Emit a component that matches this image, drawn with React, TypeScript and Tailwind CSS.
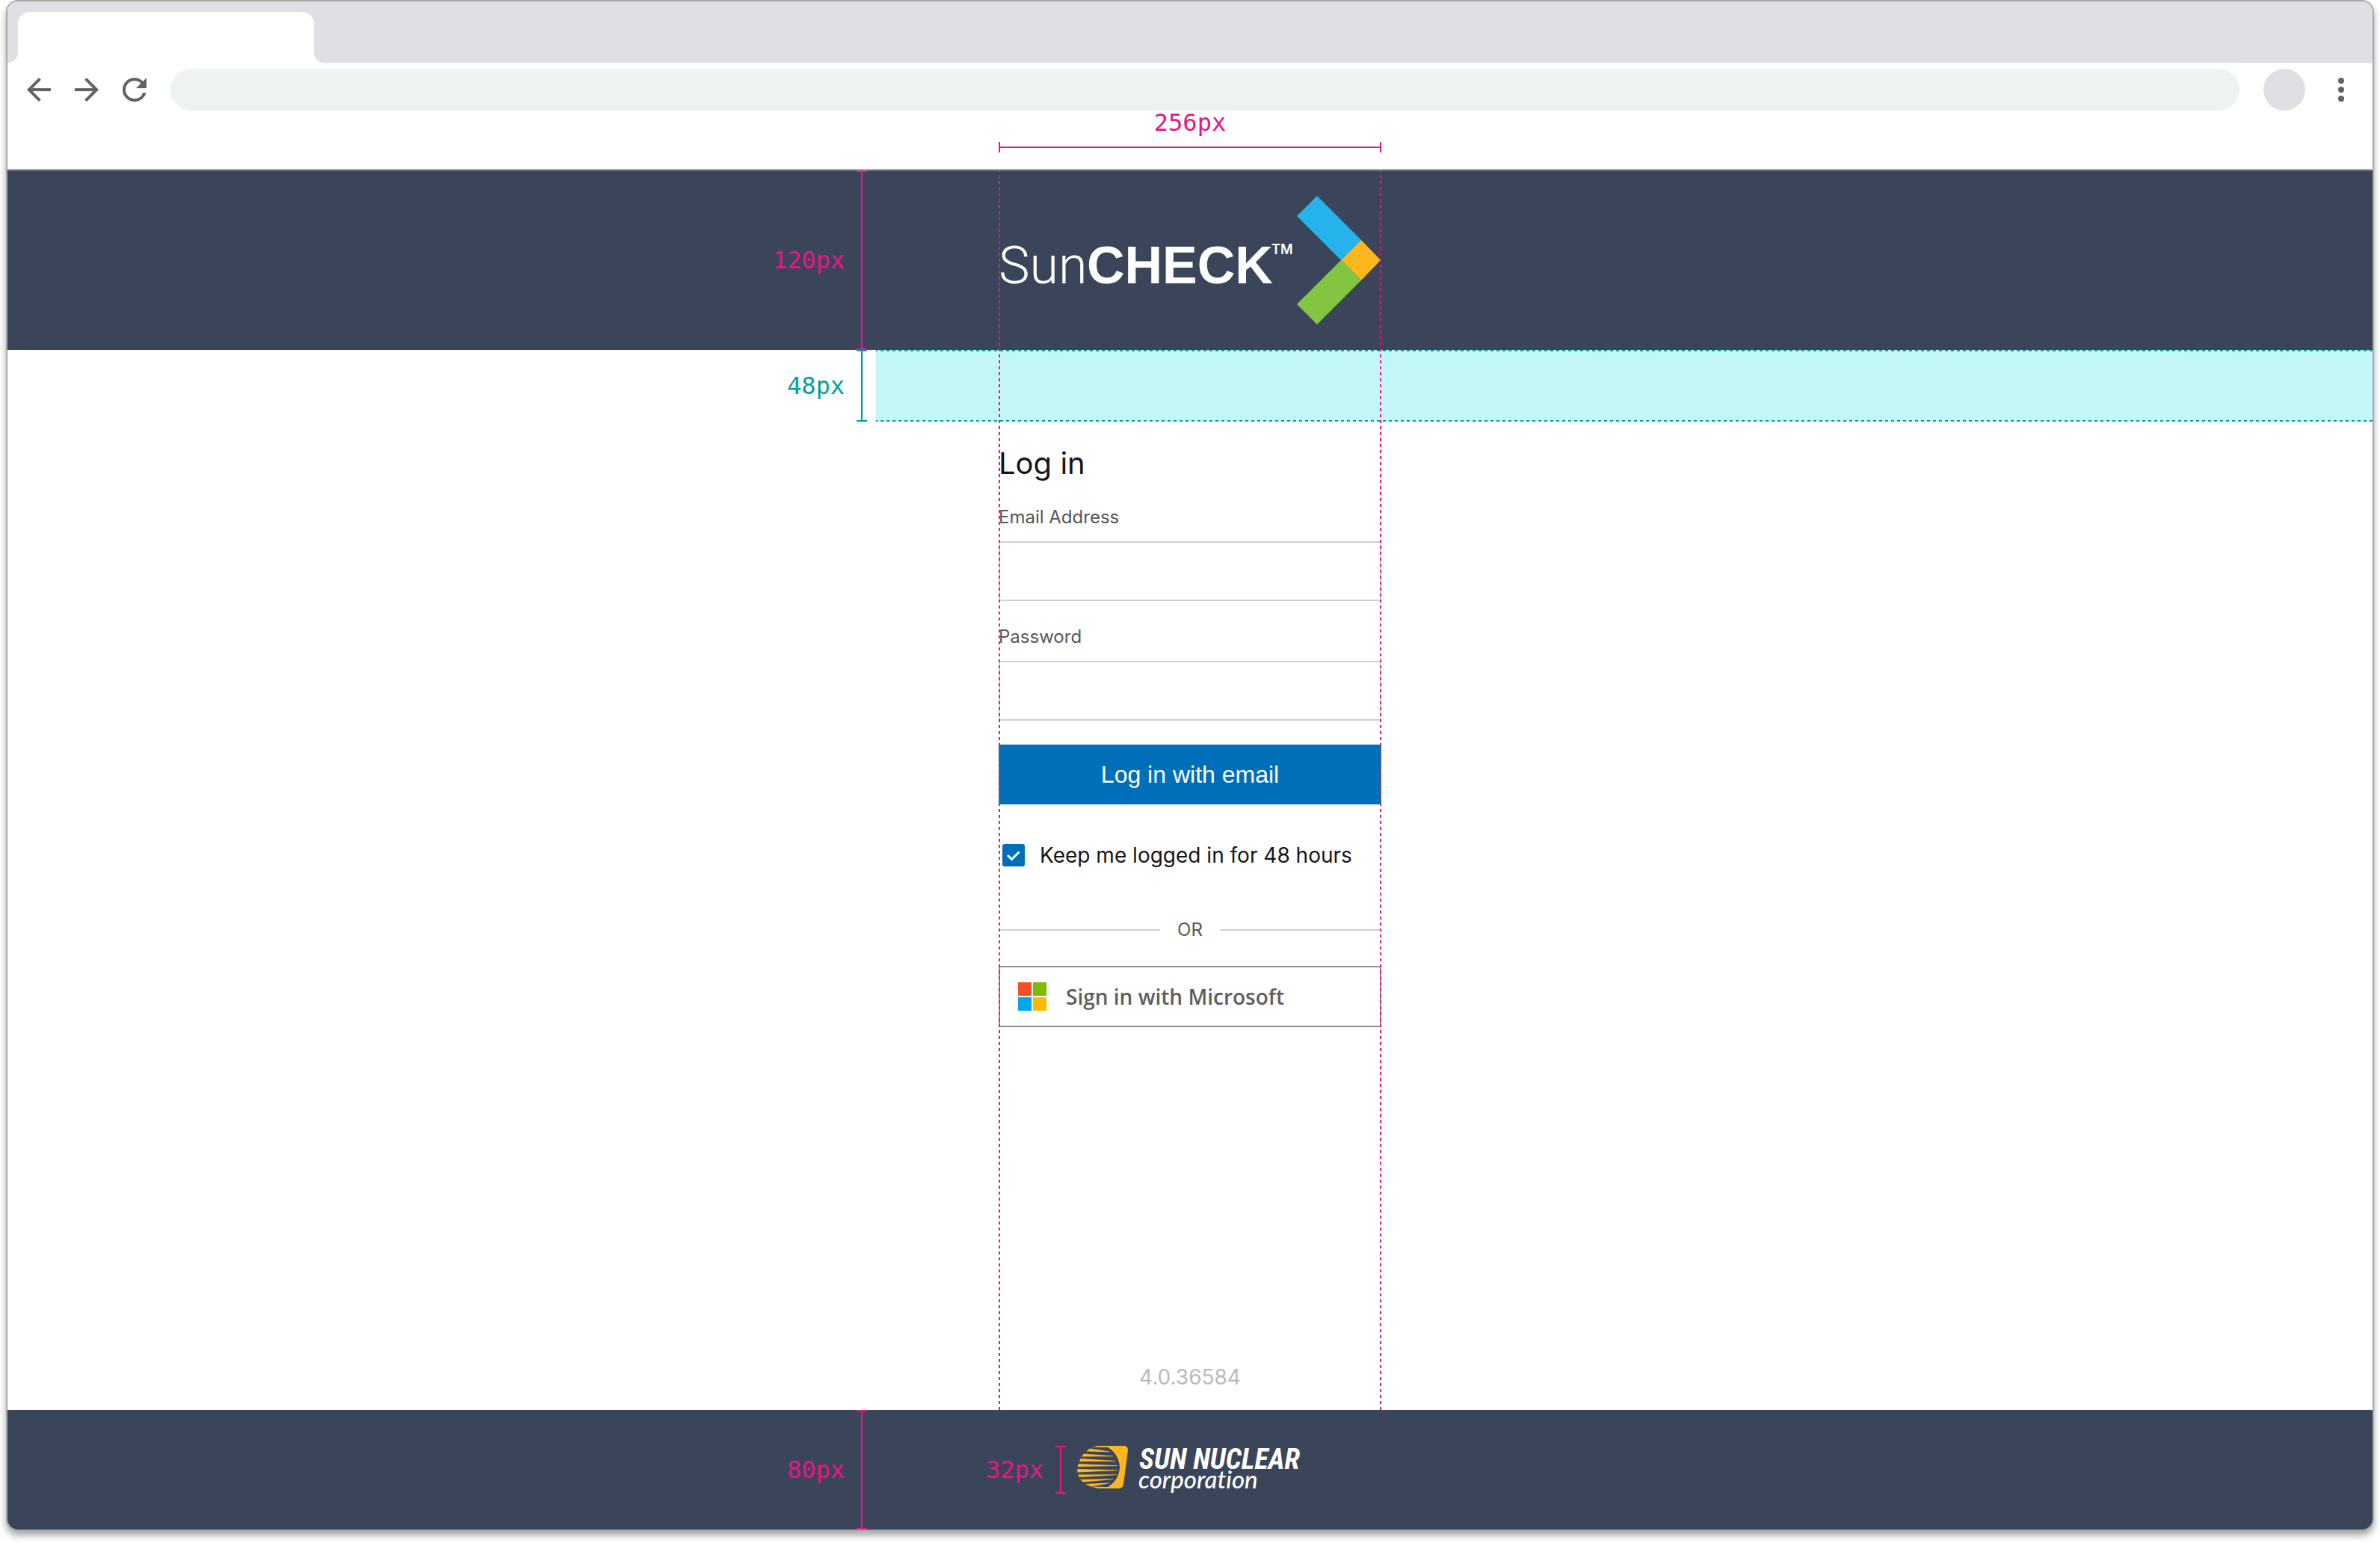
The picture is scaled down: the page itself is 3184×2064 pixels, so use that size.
import React from "react";

const MONO = "font-['DejaVu_Sans_Mono',monospace]";

function Bracket({ tone }: { tone: string }) {
  return (
    <span className={`flex w-3.5 flex-col items-center self-stretch ${tone}`} aria-hidden="true">
      <span className="h-0.5 w-full bg-current" />
      <span className="w-0.5 flex-1 bg-current" />
      <span className="h-0.5 w-full bg-current" />
    </span>
  );
}

function HeightMeasure({ label, tone, place }: { label: string; tone: string; place: string }) {
  return (
    <div className={`pointer-events-none absolute flex items-center gap-4 ${place} ${tone}`}>
      <span className={`${MONO} text-[32px] leading-10 whitespace-nowrap`}>{label}</span>
      <Bracket tone={tone} />
    </div>
  );
}

function SunCheckLogo() {
  return (
    <svg viewBox="0 0 512 172" className="h-[172px] w-[512px]" role="img" aria-label="SunCHECK">
      <g fill="#fff">
        <text x="0" y="117" fontSize="70" fontWeight="300" fontFamily="Roboto, sans-serif">Sun</text>
        <text x="118" y="117" fontSize="70" fontWeight="700" fontFamily="Liberation Sans, sans-serif">CHECK</text>
        <text x="365" y="78" fontSize="18" fontWeight="600" fontFamily="Inter, sans-serif">TM</text>
      </g>
      <path d="M426 0 485 59 458 86 399 27Z" fill="#25b3eb" />
      <path d="M485 59 511 86 485 113 458 86Z" fill="#fdb71e" />
      <path d="M458 86 485 113 426 172 399 145Z" fill="#83c441" />
    </svg>
  );
}

function SunNuclearLogo() {
  return (
    <svg viewBox="0 -8 302 80" className="h-20 w-[302px]" role="img" aria-label="Sun Nuclear corporation">
      <path
        d="M28 0H63Q68 0 68 6L62 51Q61 57 56 57H28L18 54.500 41 55Q56 46 57 29 56 11 41 2L20 2Z"
        fill="#fdb71e"
      />
      <g fill="#fdb71e">
        <path d="M17 3.500 43 7.500 43 8.200 12 7.500Z" />
        <path d="M9 10.500 48 13.500 48 14.200 6 14.500Z" />
        <path d="M4.500 17 52 20 52 20.700 3 21Z" />
        <path d="M1.500 24 54 26.200 54 27 0.500 28Z" />
        <path d="M0 31 54 32.200 54 33 0.500 35.500Z" />
        <path d="M1 38.500 53 38.200 53 39 3 42Z" />
        <path d="M4 45 48 44.200 48 45 8 48.500Z" />
        <path d="M11 51 43 49.500 43 50.200 18 54.500Z" />
      </g>
      <g fill="#fff" fontStyle="italic" className="[font-variant-ligatures:none]">
        <text x="83" y="31" fontSize="38" fontWeight="700" fontFamily="Liberation Sans Narrow, Roboto Condensed, sans-serif">SUN NUCLEAR</text>
        <text x="82" y="57" fontSize="33" fontWeight="500" fontFamily="Lato, sans-serif">corporation</text>
      </g>
    </svg>
  );
}

function Field({ id, label, type }: { id: string; label: string; type: string }) {
  return (
    <div className="flex flex-col">
      <label htmlFor={id} className="h-12 text-2xl leading-8 text-[#565656]">
        {label}
      </label>
      <input id={id} type={type} className="h-20 w-full border-2 border-[#cdd1d9] bg-white px-4 text-[28px] outline-none" />
    </div>
  );
}

function BrowserChrome() {
  return (
    <>
      <div className="flex h-[82px] items-end bg-[#dfe0e4]">
        <div className="h-3.5 w-3.5 bg-[radial-gradient(circle_at_0_0,transparent_14px,#fff_14px)]" />
        <div className="h-[68px] w-[396px] rounded-t-2xl bg-white" />
        <div className="h-3.5 w-3.5 bg-[radial-gradient(circle_at_100%_0,transparent_14px,#fff_14px)]" />
      </div>
      <div className="h-36 border-b-2 border-[#a9a9a9] bg-white pt-2">
        <div className="flex h-14 items-center pl-2.5 pr-[18px] text-[#5f6368]">
          <button type="button" aria-label="Back" className="mx-2">
            <svg viewBox="0 0 24 24" className="size-12" fill="currentColor">
              <path d="M20 11H7.830l5.590-5.590L12 4l-8 8 8 8 1.410-1.410L7.830 13H20v-2z" />
            </svg>
          </button>
          <button type="button" aria-label="Forward" className="mx-2">
            <svg viewBox="0 0 24 24" className="size-12" fill="currentColor">
              <path d="M12 4l-1.410 1.410L16.170 11H4v2h12.170l-5.580 5.590L12 20l8-8z" />
            </svg>
          </button>
          <button type="button" aria-label="Reload" className="mx-2">
            <svg viewBox="0 0 24 24" className="size-12" fill="currentColor">
              <path d="M17.650 6.350A7.958 7.958 0 0 0 12 4a8 8 0 1 0 7.730 10h-2.080A5.990 5.990 0 0 1 12 18c-3.310 0-6-2.690-6-6s2.690-6 6-6c1.660 0 3.140.690 4.220 1.780L13 11h7V4l-2.350 2.350z" />
            </svg>
          </button>
          <input aria-label="Address" className="ml-4 h-14 min-w-0 flex-1 rounded-full bg-[#eef2f3] px-8 text-[28px] outline-none" />
          <button type="button" aria-label="Profile" className="ml-8 size-14 rounded-full bg-[#dfe0e4]" />
          <button type="button" aria-label="Menu" className="ml-6">
            <svg viewBox="0 0 24 24" className="size-12" fill="currentColor">
              <circle cx="12" cy="6" r="2" />
              <circle cx="12" cy="12" r="2" />
              <circle cx="12" cy="18" r="2" />
            </svg>
          </button>
        </div>
      </div>
    </>
  );
}

function Guides() {
  const line =
    "w-0.5 bg-[linear-gradient(to_bottom,#e91588_50%,transparent_50%)] [background-size:2px_8px] [background-position:0_-2px]";
  return (
    <div className="pointer-events-none absolute inset-y-0 left-1/2 flex w-[512px] -translate-x-1/2 justify-between">
      <span className={line} />
      <span className={line} />
    </div>
  );
}

function WidthMeasure() {
  return (
    <div className="pointer-events-none absolute bottom-full left-1/2 mb-6 flex w-[512px] -translate-x-1/2 flex-col items-center gap-1.5 text-[#e91588]">
      <span className={`${MONO} text-[32px] leading-10`}>256px</span>
      <span className="flex h-3.5 w-full items-center" aria-hidden="true">
        <span className="h-full w-0.5 bg-current" />
        <span className="h-0.5 flex-1 bg-current" />
        <span className="h-full w-0.5 bg-current" />
      </span>
    </div>
  );
}

const dashes =
  "h-0.5 bg-[linear-gradient(to_right,#00a19a_50%,transparent_50%)] [background-size:8px_2px] [background-position:-2px_0]";

export default function App() {
  return (
    <div className="flex min-h-screen flex-col bg-white px-2 pb-4 font-['Inter',sans-serif] text-[#161616]">
      <div className="flex flex-1 flex-col overflow-hidden rounded-2xl border-2 border-[#a9a9a9] bg-white shadow-[0_6px_10px_rgba(0,0,0,0.35)]">
        <BrowserChrome />

        <div className="relative flex flex-1 flex-col">
          <header className="relative flex h-60 items-center justify-center bg-[#3b4559]">
            <SunCheckLogo />
            <HeightMeasure label="120px" tone="text-[#e91588]" place="inset-y-0 right-[calc(50%+432px)]" />
          </header>

          <main className="flex flex-1 flex-col">
            <div className="relative h-24">
              <div className="ml-[calc(50%-420px)] flex h-full flex-col justify-between bg-[#c3f6f7]">
                <div className={dashes} />
                <div className={dashes} />
              </div>
              <HeightMeasure label="48px" tone="text-[#00a19a]" place="inset-y-0 right-[calc(50%+432px)]" />
            </div>

            <form className="mx-auto flex w-[512px] flex-col" onSubmit={(e) => e.preventDefault()}>
              <h1 className="mt-8 text-[40px] leading-12">Log in</h1>
              <div className="mt-8 flex flex-col gap-8">
                <Field id="email" label="Email Address" type="email" />
                <Field id="password" label="Password" type="password" />
              </div>
              <button
                type="submit"
                className="mt-8 h-20 bg-[#006fba] font-['Liberation_Sans',sans-serif] text-[32px] text-white"
              >
                Log in with email
              </button>
              <label className="mt-11 flex h-12 items-center pl-[5px] text-[28px]">
                <span className="relative flex size-[30px]">
                  <input type="checkbox" defaultChecked className="size-[30px] appearance-none rounded-[3px] bg-[#006fba]" />
                  <svg viewBox="0 0 30 30" className="pointer-events-none absolute inset-0" fill="none" stroke="#fff" strokeWidth="3">
                    <path d="M7 15 12.500 20.500 22.500 10.500" />
                  </svg>
                </span>
                <span className="ml-5">Keep me logged in for 48 hours</span>
              </label>
              <div className="mt-14 flex h-10 items-center text-2xl text-[#565656]">
                <span className="h-0.5 flex-1 bg-[#cdd1d9]" />
                <span className="w-20 text-center">OR</span>
                <span className="h-0.5 flex-1 bg-[#cdd1d9]" />
              </div>
              <button
                type="button"
                className="mt-7 flex h-[82px] items-center gap-[26px] border-2 border-[#8c8c8c] bg-white px-6 font-['Open_Sans',sans-serif] text-[28px] font-semibold text-[#5e5e5e]"
              >
                <svg viewBox="0 0 38 38" className="size-[38px]" aria-hidden="true">
                  <path d="M0 0h18v18H0z" fill="#f25022" />
                  <path d="M20 0h18v18H20z" fill="#7fba00" />
                  <path d="M0 20h18v18H0z" fill="#00a4ef" />
                  <path d="M20 20h18v18H20z" fill="#ffb900" />
                </svg>
                Sign in with Microsoft
              </button>
            </form>

            <p className="mt-auto mb-6 text-center text-[28px] leading-10 text-[#bababa]">4.0.36584</p>
          </main>

          <Guides />
          <WidthMeasure />
        </div>

        <footer className="relative flex h-40 justify-center bg-[#3b4559] pt-10">
          <SunNuclearLogo />
          <HeightMeasure label="80px" tone="text-[#e91588]" place="inset-y-0 right-[calc(50%+432px)]" />
          <HeightMeasure label="32px" tone="text-[#e91588]" place="inset-y-12 right-[calc(50%+166px)]" />
        </footer>
      </div>
    </div>
  );
}
